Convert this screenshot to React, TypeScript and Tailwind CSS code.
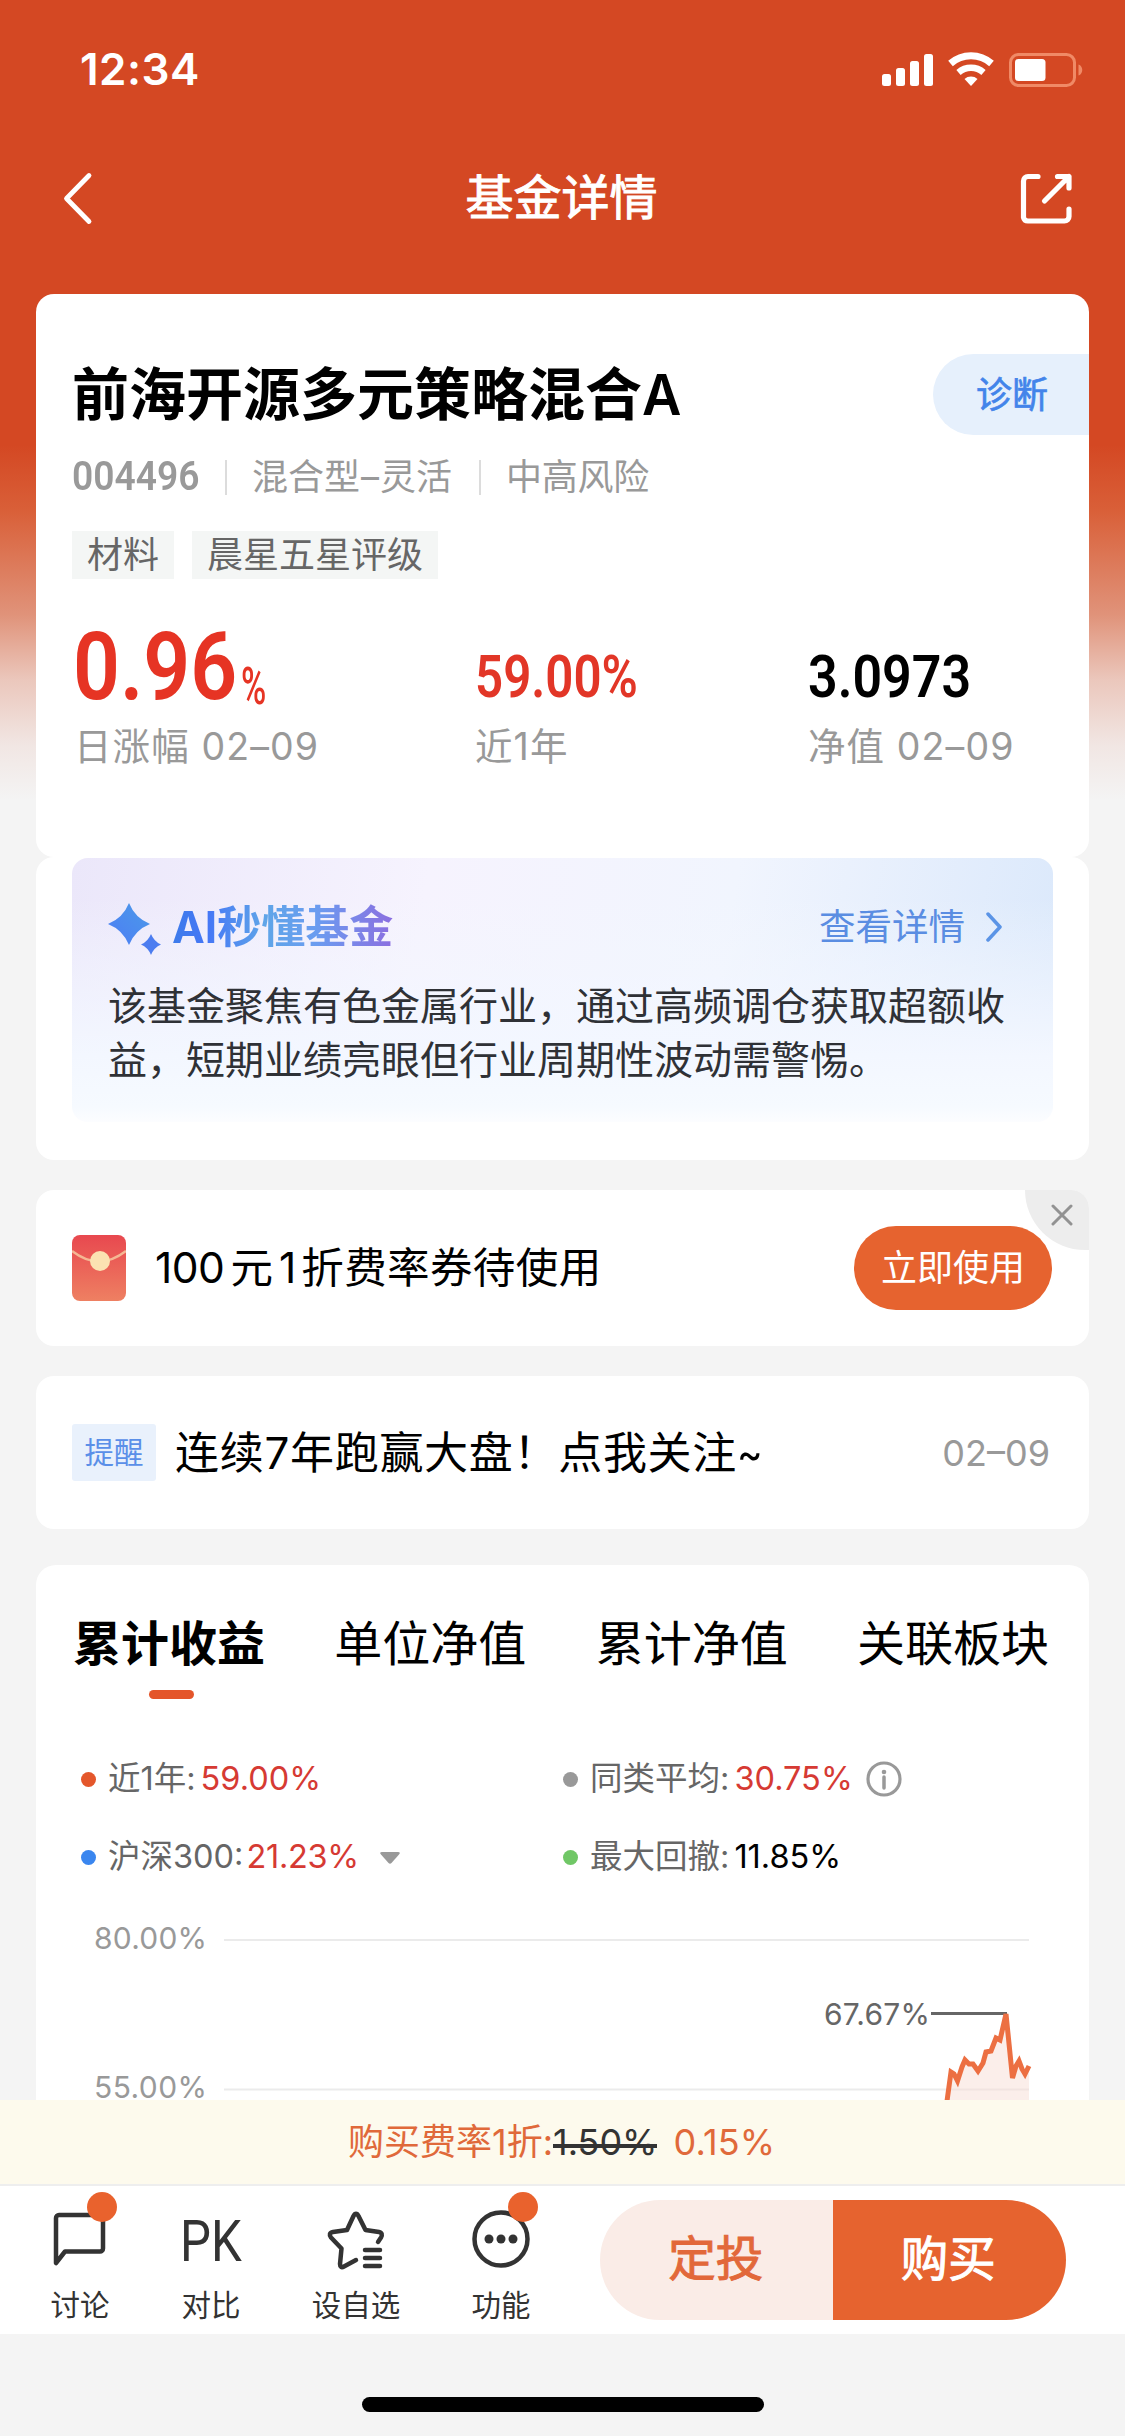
import type { ReactNode } from "react";

const tabs = ["累计收益", "单位净值", "累计净值", "关联板块"];

const stats = [
  { value: "59.00%", label: "近1年", color: "text-[#e23627] scale-x-[0.835]", pos: "w-[333px]" },
  { value: "3.0973", label: "净值 02–09", color: "text-black scale-x-[0.88]", pos: "w-[220px]" },
];

function StatusBar() {
  return (
    <div className="h-[138px] pl-[80px] pr-[42px] flex items-center justify-between text-white">
      <span className="text-[44px] leading-none font-semibold tracking-[0.5px]">12:34</span>
      <svg width="202" height="36" viewBox="0 0 202 36" fill="none">
        <rect x="1" y="23" width="9" height="12" rx="2.5" fill="#fff" />
        <rect x="15" y="17" width="9" height="18" rx="2.5" fill="#fff" />
        <rect x="29" y="10" width="9" height="25" rx="2.5" fill="#fff" />
        <rect x="43" y="3" width="9" height="32" rx="2.5" fill="#fff" />
        <path d="M69.5 12.5a31 31 0 0 1 41 0" stroke="#fff" strokeWidth="7" />
        <path d="M77.5 21.5a19 19 0 0 1 25 0" stroke="#fff" strokeWidth="6.5" />
        <path d="M90 35l-6.5-7a10 10 0 0 1 13 0z" fill="#fff" />
        <rect x="129.500" y="3.500" width="64" height="31" rx="8" stroke="#f08a66" strokeWidth="3" />
        <rect x="134" y="8" width="30.500" height="22" rx="3.500" fill="#fff" />
        <path d="M197.500 13.500c5 1.500 5 9.500 0 11z" fill="#f08a66" />
      </svg>
    </div>
  );
}

function NavBar() {
  return (
    <div className="h-[120px] pl-[60px] pr-[50px] flex items-center justify-between text-white">
      <svg width="40" height="56" viewBox="0 0 40 56" fill="none">
        <path d="M29 5.500L6.500 28.500 29 51.500" stroke="#fff" strokeWidth="4.800" strokeLinecap="round" strokeLinejoin="round" />
      </svg>
      <h1 className="pl-[4px] text-[48px] leading-none [-webkit-text-stroke:1px_#fff]">基金详情</h1>
      <svg width="56" height="56" viewBox="0 0 56 56" fill="none" stroke="#fff" strokeWidth="5.200" strokeLinecap="round" strokeLinejoin="round">
        <path d="M19 6.500H9a4.500 4.500 0 0 0-4.500 4.500v36.500A4.500 4.500 0 0 0 9 51h36.500a4.500 4.500 0 0 0 4.500-4.500V39" />
        <path d="M38.500 6.500H50V18M50 6.500L25.500 31" />
      </svg>
    </div>
  );
}

function FundCard() {
  return (
    <section className="h-[563px] rounded-[18px] bg-white pl-[36px] pt-[60px]">
      <div className="h-[81px] flex items-center justify-between">
        <h2 className="text-[57px] leading-none font-bold text-black">
          前海开源多元策略混合<span className="inline-block origin-left scale-x-[0.95] font-semibold">A</span>
        </h2>
        <div className="w-[156px] h-[81px] pl-[2px] rounded-l-full bg-[#e6f0fc] flex items-center justify-center text-[36px] leading-none text-[#4384ea] [-webkit-text-stroke:0.7px_#4384ea]">
          诊断
        </div>
      </div>
      <div className="mt-[21px] h-[42px] flex items-center text-[36px] leading-none text-[#999]">
        <span className="w-[153px] shrink-0">
          <span className="block origin-left scale-x-[0.93] font-[Roboto] font-semibold text-[40px]">004496</span>
        </span>
        <i className="w-[2px] h-[35px] mr-[25px] bg-[#dcdcdc]" />
        <span>
          混合型<span className="mx-px">–</span>灵活
        </span>
        <i className="w-[2px] h-[35px] ml-[27px] mr-[25px] bg-[#dcdcdc]" />
        <span className="tracking-[-0.3px]">中高风险</span>
      </div>
      <div className="mt-[33px] flex gap-[18px] text-[36px] leading-none text-[#666]">
        <span className="h-[48px] px-[15px] bg-[#f4f6f5] flex items-center">材料</span>
        <span className="h-[48px] px-[15px] bg-[#f4f6f5] flex items-center">晨星五星评级</span>
      </div>
      <div className="mt-[40px] flex items-end">
        <div className="w-[403px]">
          <div className="h-[94px] flex items-end text-[#e63424] font-[Roboto] leading-none">
            <span className="block w-[169px] h-[94px] pl-px">
              <span className="block origin-left scale-x-[0.865] text-[95px] leading-[96px] font-semibold">0.96</span>
            </span>
            <span className="block origin-left scale-x-[0.66] text-[52px] leading-none font-medium">%</span>
          </div>
          <div className="mt-[14px] pl-[2px] h-[40px] flex items-center text-[37.5px] leading-none tracking-[1.1px] text-[#999]">日涨幅 02–09</div>
        </div>
        {stats.map((s) => (
          <div key={s.label} className={s.pos}>
            <div className={"block origin-left font-[Roboto] font-semibold text-[59px] leading-[60px] whitespace-nowrap " + s.color}>{s.value}</div>
            <div className="mt-[20px] h-[40px] flex items-center text-[37.5px] leading-none tracking-[1.1px] text-[#999] whitespace-nowrap">{s.label}</div>
          </div>
        ))}
      </div>
    </section>
  );
}

function AiCard() {
  return (
    <section className="h-[303px] rounded-[18px] bg-white px-9 pt-px">
      <div className="h-[264px] rounded-[16px] px-9 pt-[45px] bg-[linear-gradient(to_bottom,transparent_15%,#f3f7ff_75%,#f6faff_94%,#fcfdff_100%),linear-gradient(100deg,#ebe7fa_0%,#f6f3fe_35%,#f1f5fe_65%,#dae8fb_100%)]">
        <div className="h-[48px] flex items-center">
          <svg width="54" height="54" viewBox="0 0 54 54" className="mt-[6px]">
            <defs>
              <linearGradient id="spark" x1="0" y1="1" x2="1" y2="0">
                <stop offset="0" stopColor="#4d7df5" />
                <stop offset="1" stopColor="#4b9ae8" />
              </linearGradient>
            </defs>
            <path d="M21 0Q27 15 42 21 27 27 21 42 15 27 0 21 15 15 21 0z" fill="url(#spark)" />
            <path d="M43 31Q46 38.500 53 41.500 46 44.500 43 52 40 44.500 33 41.500 40 38.500 43 31z" fill="#4c7df0" />
          </svg>
          <span className="ml-[10px] text-[44px] leading-[50px] font-bold bg-[linear-gradient(90deg,#3d7bea,#4577f6_16%,#5fa5e8_42%,#6a9cf0_65%,#8b6fe0)] bg-clip-text text-transparent">
            AI秒懂基金
          </span>
          <span className="ml-auto text-[36.500px] leading-none text-[#5a8de2]">查看详情</span>
          <svg width="18" height="30" viewBox="0 0 18 30" fill="none" className="ml-[20px] mr-[14px]">
            <path d="M3 2l12 13L3 28" stroke="#5b94e6" strokeWidth="3.500" strokeLinecap="round" strokeLinejoin="round" />
          </svg>
        </div>
        <p className="mt-[28px] w-[910px] text-[39px] leading-[54px] text-[#2f3136]">
          该基金聚焦有色金属行业，通过高频调仓获取超额收
          <br />
          益，短期业绩亮眼但行业周期性波动需警惕。
        </p>
      </div>
    </section>
  );
}

function CouponCard() {
  return (
    <section className="relative mt-[30px] h-[156px] rounded-[18px] overflow-hidden bg-white pl-9 pr-[37px] flex items-center">
      <svg width="54" height="66" viewBox="0 0 54 66">
        <defs>
          <linearGradient id="env" x1="0" y1="0" x2="0" y2="1">
            <stop offset="0" stopColor="#e8484f" />
            <stop offset="1" stopColor="#ee8062" />
          </linearGradient>
        </defs>
        <rect width="54" height="66" rx="8" fill="url(#env)" />
        <path d="M0 16Q27 37 54 16" fill="none" stroke="#f5b793" strokeWidth="2.500" />
        <circle cx="28" cy="26" r="10" fill="#fbe2b2" />
      </svg>
      <div className="ml-[29px] flex items-center text-[42.500px] leading-none text-black">
        <span className="tracking-[-0.5px]">100</span>
        <span className="ml-[6px]">元</span>
        <span className="ml-[6px]">1</span>
        <span className="ml-[5px] tracking-[0.4px]">折费率券待使用</span>
      </div>
      <button className="ml-auto w-[198px] h-[84px] rounded-full bg-[#e6632f] text-[36px] leading-none text-white">立即使用</button>
      <div className="absolute right-0 top-0 w-[64px] h-[60px] rounded-bl-full bg-[#ededed]">
        <svg width="22" height="22" viewBox="0 0 22 22" className="absolute left-[26px] top-[14px]">
          <path d="M2 2l18 18M20 2L2 20" stroke="#929292" strokeWidth="3" strokeLinecap="round" />
        </svg>
      </div>
    </section>
  );
}

function NoticeCard() {
  return (
    <section className="mt-[30px] h-[153px] rounded-[18px] bg-white pl-9 pr-[39px] flex items-center">
      <span className="w-[84px] h-[57px] rounded-[3px] bg-[#e9f1fc] flex items-center justify-center text-[29.500px] leading-none text-[#5a8fe8]">提醒</span>
      <span className="ml-[19px] text-[44px] leading-none tracking-[0.7px] text-black">
        连续7年跑赢大盘！点我关注<span className="inline-block origin-left scale-x-[0.88]">~</span>
      </span>
      <span className="ml-auto text-[36px] leading-none text-[#999]">02–09</span>
    </section>
  );
}

function Legend({ dot, name, value, valueColor, children }: { dot: string; name: string; value: string; valueColor: string; children?: ReactNode }) {
  return (
    <div className="h-[78px] w-[482px] flex items-center text-[32.500px] leading-none whitespace-nowrap">
      <i className={"size-[15px] mr-[12px] rounded-full " + dot} />
      <span className="text-[#666]">{name}:</span>
      <span className={"ml-[5px] " + valueColor}>{value}</span>
      {children}
    </div>
  );
}

function ChartCard() {
  return (
    <section className="mt-9 h-[535px] rounded-t-[20px] bg-white">
      <div className="pl-[38px] pr-[40px] pt-[52px] h-[134px] flex justify-between">
        {tabs.map((t, i) => (
          <div key={t} className="flex flex-col items-center text-[48px] leading-[54px] text-black">
            <span className="-ml-px">{i === 0 ? <b className="font-bold">{t}</b> : t}</span>
            {i === 0 && <i className="mt-[19px] ml-[3px] w-[45px] h-[9px] rounded-full bg-[#e4552a]" />}
          </div>
        ))}
      </div>
      <div className="pl-[45px] mt-[41px] flex flex-wrap">
        <Legend dot="bg-[#e4572b]" name="近1年" value="59.00%" valueColor="text-[#d63a33]" />
        <Legend dot="bg-[#999]" name="同类平均" value="30.75%" valueColor="text-[#d63a33]">
          <svg width="36" height="36" viewBox="0 0 36 36" fill="none" className="ml-[13px]">
            <circle cx="18" cy="18" r="16" stroke="#999" strokeWidth="3.200" />
            <circle cx="18" cy="11" r="2.300" fill="#999" />
            <path d="M18 16v11" stroke="#999" strokeWidth="3.500" strokeLinecap="round" />
          </svg>
        </Legend>
        <Legend dot="bg-[#3a86ef]" name="沪深300" value="21.23%" valueColor="-translate-x-[2px] tracking-[-0.300px] text-[#d63a33]">
          <svg width="20" height="12" viewBox="0 0 20 12" className="ml-[19px] mt-[2px]">
            <path d="M2 0h16q3 0 1 2.500L11.500 11q-1.500 1.500-3 0L1 2.500Q-1 0 2 0z" fill="#999" />
          </svg>
        </Legend>
        <Legend dot="bg-[#70c766]" name="最大回撤" value="11.85%" valueColor="text-black" />
      </div>
      <svg width="1053" height="204" viewBox="36 1896 1053 204" className="block overflow-visible" fontSize="30" fill="#999">
        <path d="M224 1940H1029M224 2089.500H1029" stroke="#ebebeb" strokeWidth="2" />
        <text x="94" y="1949" textLength="113">80.00%</text>
        <text x="94" y="2097.500" textLength="113">55.00%</text>
        <path
          d="M947 2100L951 2072 957 2081 965 2060 972 2064 978 2071 986 2053 990 2051 996 2038 1000 2039 1006 2014 1012.500 2078 1019 2061 1024 2073 1029 2066V2100z"
          fill="#fbeeea"
        />
        <path d="M947 2089.500H1029" stroke="#f1e3e0" strokeWidth="2" />
        <text x="824" y="2025" textLength="106" fill="#666">67.67%</text>
        <path d="M931 2013.500H1007" stroke="#666" strokeWidth="3" />
        <path
          d="M947 2101L951 2072 954 2074 957.500 2081 962 2067 965 2060 969 2064 973 2064 978 2071 983 2063 986 2052 991 2051 996 2038 1000 2040 1006 2014 1012.500 2078 1016 2066 1019 2061 1022 2069 1025 2074 1029 2066"
          fill="none"
          stroke="#ec6f42"
          strokeWidth="5"
        />
      </svg>
    </section>
  );
}

function FeeBar() {
  return (
    <div className="relative h-[84px] bg-[#fdfaed] pl-[348px] flex items-center text-[36px] leading-none text-[#e0693a]">
      <span>购买费率1折:</span>
      <span className="relative text-[#333]">
        1.50%
        <i className="absolute left-0 right-0 top-[20px] h-[4px] bg-[#333]" />
      </span>
      <span className="ml-[16px] tracking-[0.2px]">0.15%</span>
    </div>
  );
}

function ToolItem({ label, width, badge, children }: { label: string; width: string; badge?: boolean; children: ReactNode }) {
  return (
    <div className={"flex flex-col items-center " + width}>
      <div className="relative size-[64px] flex items-center justify-center">
        {children}
        {badge && <i className="absolute left-[39px] -top-[15px] size-[30px] rounded-full bg-[#e9622d]" />}
      </div>
      <span className="mt-[16px] text-[29.500px] leading-[36px] text-[#333]">{label}</span>
    </div>
  );
}

function BottomBar() {
  return (
    <div className="h-[150px] bg-white border-t-2 border-[#eeeeee] pl-[20px] pr-[59px] flex">
      <div className="pt-[21px] flex">
        <ToolItem label="讨论" width="w-[120px]" badge>
          <svg width="64" height="64" viewBox="0 0 64 64" fill="none">
            <path d="M8 56V11a3 3 0 0 1 3-3h41a3 3 0 0 1 3 3v30.500a3 3 0 0 1-3 3H17z" stroke="#333" strokeWidth="4.500" strokeLinejoin="round" />
          </svg>
        </ToolItem>
        <ToolItem label="对比" width="w-[142px]">
          <span className="block mt-[4px] scale-x-[0.86] text-[57px] leading-none text-[#333] font-[Roboto]">PK</span>
        </ToolItem>
        <ToolItem label="设自选" width="w-[148px]">
          <svg width="64" height="64" viewBox="0 0 64 64" fill="none" stroke="#333" strokeWidth="4.500" strokeLinecap="round" strokeLinejoin="round">
            <path d="M54 35l3-4.500c1.500-2.500 1-5-2-5.500L41.500 23 34.500 9c-1.500-3-3.500-3-5 0L23 23 9 25c-3.500.5-4 3-2 5.500L17.500 41.500 16 57c0 3 1.500 4 4 2.500L32 53" />
            <path d="M41 43h15M41 51h15M41 59h15" />
          </svg>
        </ToolItem>
        <ToolItem label="功能" width="w-[142px]" badge>
          <svg width="64" height="64" viewBox="0 0 64 64" fill="none">
            <circle cx="32" cy="32" r="26.500" stroke="#333" strokeWidth="4.500" />
            <circle cx="20" cy="32" r="4.500" fill="#333" />
            <circle cx="32" cy="32" r="4.500" fill="#333" />
            <circle cx="44" cy="32" r="4.500" fill="#333" />
          </svg>
        </ToolItem>
      </div>
      <div className="ml-auto mt-[14px] w-[466px] h-[120px] rounded-full overflow-hidden flex text-[47.500px] leading-none">
        <button className="flex-1 pr-px pb-[3px] bg-[#faece7] text-[#e2683a] [-webkit-text-stroke:1px_#e2683a]">定投</button>
        <button className="flex-1 pr-[2px] pb-[3px] bg-[#e6632f] text-white [-webkit-text-stroke:1px_#fff]">购买</button>
      </div>
    </div>
  );
}

export default function App() {
  return (
    <div className="w-[1125px] h-[2436px] overflow-hidden font-[Inter,'Noto_Sans_CJK_SC',sans-serif] bg-[linear-gradient(to_bottom,#d44823_0px,#d44823_445px,#d95f38_510px,#e0937a_615px,#ebc7bc_680px,#f1e6e3_745px,#f4f4f4_800px)]">
      <StatusBar />
      <NavBar />
      <main className="mt-9 px-9">
        <FundCard />
        <AiCard />
        <CouponCard />
        <NoticeCard />
        <ChartCard />
      </main>
      <FeeBar />
      <BottomBar />
      <div className="h-[102px] pt-[63px] flex justify-center">
        <div className="w-[402px] h-[15px] rounded-full bg-black" />
      </div>
    </div>
  );
}
